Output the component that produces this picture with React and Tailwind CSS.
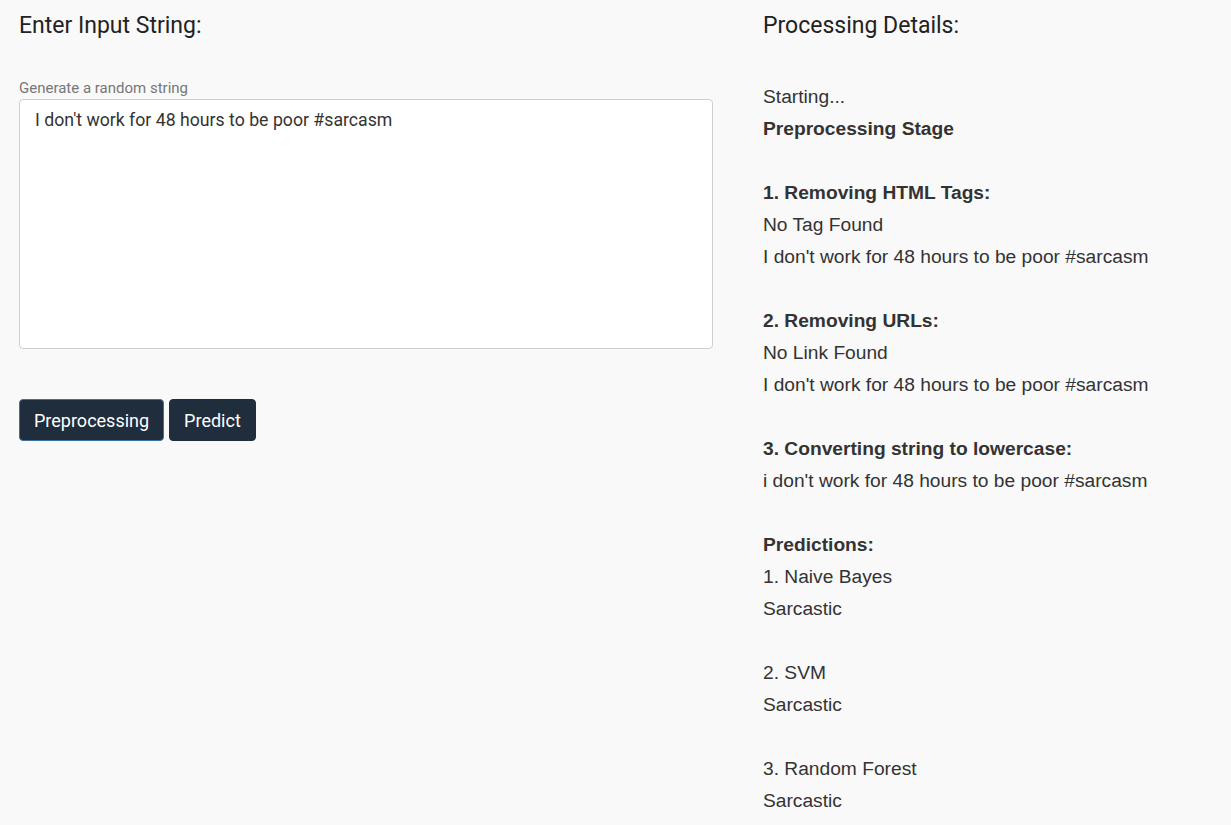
import React, { useState } from 'react';

const lines = [
  { t: 'Starting...' },
  { t: 'Preprocessing Stage', b: true },
  { t: '' },
  { t: '1. Removing HTML Tags:', b: true },
  { t: 'No Tag Found' },
  { t: "I don't work for 48 hours to be poor #sarcasm" },
  { t: '' },
  { t: '2. Removing URLs:', b: true },
  { t: 'No Link Found' },
  { t: "I don't work for 48 hours to be poor #sarcasm" },
  { t: '' },
  { t: '3. Converting string to lowercase:', b: true },
  { t: "i don't work for 48 hours to be poor #sarcasm" },
  { t: '' },
  { t: 'Predictions:', b: true },
  { t: '1. Naive Bayes' },
  { t: 'Sarcastic' },
  { t: '' },
  { t: '2. SVM' },
  { t: 'Sarcastic' },
  { t: '' },
  { t: '3. Random Forest' },
  { t: 'Sarcastic' },
];

export default function App() {
  const [text, setText] = useState("I don't work for 48 hours to be poor #sarcasm");

  return (
    <div className="min-h-screen bg-[#f9f9f9] flex pl-[19px] font-[family-name:Roboto,sans-serif] text-[#222]">
      {/* input side */}
      <div className="w-[694px] shrink-0">
        <h2 className="text-[23px] leading-[26px] pt-[13px]">Enter Input String:</h2>
        <label className="block mt-[41px] text-[15px] leading-[16px] text-[#777]">Generate a random string</label>
        <textarea
          value={text}
          onChange={(e) => setText(e.target.value)}
          className="block mt-[3px] w-full h-[250px] bg-white border border-[#cfcfcf] rounded-[4px] px-[15px] py-[8px] text-[17.7px] leading-[24px] text-[#333] resize-none outline-none font-[family-name:Roboto,sans-serif]"
        />
        <div className="flex gap-[5px] mt-[50px]">
          <button className="h-[42px] px-[14px] bg-[#1f2d3d] text-white text-[18px] rounded-[4px] border border-[#3d6fa3]">
            Preprocessing
          </button>
          <button className="h-[42px] px-[14px] bg-[#1f2d3d] text-white text-[18px] rounded-[4px] border border-[#1f2d3d]">
            Predict
          </button>
        </div>
      </div>

      {/* details side */}
      <div className="ml-[50px] flex-1">
        <h2 className="text-[23px] leading-[26px] pt-[13px]">Processing Details:</h2>
        <div className="mt-[42px] font-[family-name:'Liberation_Sans',Arial,sans-serif] text-[19.2px] leading-[32px] text-[#333]">
          {lines.map((l, i) => (
            <div key={i} className={`h-[32px] ${l.b ? 'font-bold' : ''}`}>
              {l.t}
            </div>
          ))}
        </div>
      </div>
    </div>
  );
}
